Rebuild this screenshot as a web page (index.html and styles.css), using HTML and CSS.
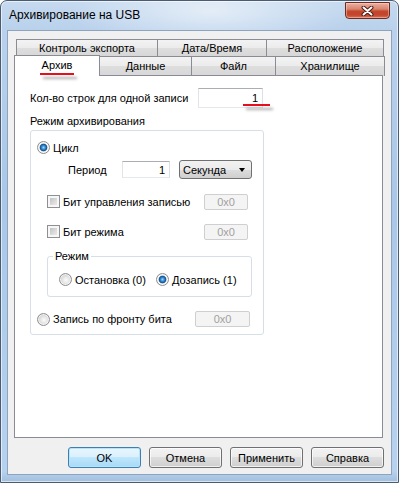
FILE: index.html
```html
<!DOCTYPE html>
<html lang="ru">

<head>
    <meta charset="UTF-8" />
    <title>Архивирование на USB</title>
    <link rel="stylesheet" href="styles.css">
</head>

<body>
    <div class="window">
        <div class="titlebar">
            <span class="title">Архивирование на USB</span>
            <button class="close-btn" type="button">
                <svg width="13" height="10" viewBox="0 0 13 10">
                    <path d="M2.5 1.5 L10.5 8.5 M10.5 1.5 L2.5 8.5" stroke="#4a1c14" stroke-width="4" stroke-linecap="round" />
                    <path d="M2.5 1.5 L10.5 8.5 M10.5 1.5 L2.5 8.5" stroke="#fff" stroke-width="2" stroke-linecap="round" />
                </svg>
            </button>
        </div>

        <div class="client">
            <div class="tabs">
                <div class="tab-row back">
                    <div class="tab">Контроль экспорта</div>
                    <div class="tab">Дата/Время</div>
                    <div class="tab">Расположение</div>
                </div>
                <div class="tab-row front">
                    <div class="tab active"><span class="mark">Архив</span></div>
                    <div class="tab">Данные</div>
                    <div class="tab">Файл</div>
                    <div class="tab">Хранилище</div>
                </div>
            </div>

            <div class="page">
                <div class="count-row">
                    <label class="count-label" for="rows">Кол-во строк для одной записи</label>
                    <div class="textbox count-box"><span class="mark">1</span></div>
                </div>

                <div class="caption">Режим архивирования</div>
                <div class="group">
                    <div class="opt-row">
                        <span class="radio on"></span>
                        <span>Цикл</span>
                    </div>

                    <div class="period-row">
                        <span class="period-label">Период</span>
                        <div class="textbox period-box">1</div>
                        <div class="combo">
                            <span>Секунда</span>
                            <span class="arrow"></span>
                        </div>
                    </div>

                    <div class="check-row first">
                        <span class="check-label"><span class="checkbox"></span>Бит управления записью</span>
                        <div class="hexbox">0x0</div>
                    </div>
                    <div class="check-row">
                        <span class="check-label"><span class="checkbox"></span>Бит режима</span>
                        <div class="hexbox">0x0</div>
                    </div>

                    <fieldset class="mode">
                        <legend>Режим</legend>
                        <div class="mode-row">
                            <span class="mode-opt stop"><span class="radio"></span>Остановка (0)</span>
                            <span class="mode-opt"><span class="radio on"></span>Дозапись (1)</span>
                        </div>
                    </fieldset>

                    <div class="edge-row">
                        <span class="edge-label"><span class="radio"></span>Запись по фронту бита</span>
                        <div class="hexbox wide">0x0</div>
                    </div>
                </div>
            </div>

            <div class="buttons">
                <button class="btn default" type="button">OK</button>
                <button class="btn" type="button">Отмена</button>
                <button class="btn" type="button">Применить</button>
                <button class="btn" type="button">Справка</button>
            </div>
        </div>
    </div>
</body>

</html>
```

FILE: styles.css
```css
* {
    box-sizing: border-box;
}

html,
body {
    margin: 0;
    background: #fff;
}

body {
    font-family: "Liberation Sans", Arial, sans-serif;
    font-size: 11px;
    color: #000;
}

/* окно */
.window {
    width: 399px;
    height: 483px;
    display: flex;
    flex-direction: column;
    padding: 0 6px 7px;
    border: 1px solid #4b5c72;
    border-radius: 7px 7px 0 0;
    background:
        radial-gradient(ellipse 140px 40px at 210px 10px, rgba(255, 255, 255, 0.55), rgba(255, 255, 255, 0)),
        linear-gradient(to bottom, #c6daef 0, #b9d1ec 30px, #a9c7e8 200px, #b6d2ef 470px, #9ebbd9 483px);
    box-shadow: inset 0 0 0 1px rgba(255, 255, 255, 0.6);
}

.titlebar {
    height: 29px;
    margin: 0 -6px;
    padding: 0 8px;
    display: flex;
    align-items: flex-start;
}

.title {
    font-size: 12px;
    line-height: 12px;
    margin-top: 8px;
    color: #000;
}

.close-btn {
    margin-left: auto;
    margin-top: 1px;
    width: 45px;
    height: 17px;
    padding: 0;
    border: 1px solid #6e2a20;
    border-radius: 0 0 4px 4px;
    background: linear-gradient(to bottom, #eab1a2 0, #d98670 40%, #c4462c 55%, #c3452b 80%, #d8765a 100%);
    box-shadow: inset 0 0 0 1px rgba(255, 220, 210, 0.45);
    display: flex;
    align-items: center;
    justify-content: center;
}

.client {
    flex: 1;
    border: 1px solid #8ea4bd;
    background: #f0f0f0;
    padding: 8px 0 0 6px;
    display: flex;
    flex-direction: column;
}

/* вкладки */
.tabs {
    width: 369px;
}

.tab-row {
    display: grid;
}

.tab-row.back {
    grid-template-columns: 142px 109px 117px;
    height: 17px;
    margin-left: 2px;
}

.tab-row.front {
    grid-template-columns: 86px 92px 84px 109px;
    height: 19px;
}

.tab {
    border: 1px solid #898c95;
    border-bottom: none;
    background: linear-gradient(to bottom, #f3f3f3 0, #ebebeb 50%, #dedede 50%, #d7d7d7 100%);
    display: flex;
    align-items: center;
    justify-content: center;
    line-height: 13px;
}

.tab + .tab {
    margin-left: -1px;
}

.tab.active {
    position: relative;
    z-index: 1;
    margin-top: -1px;
    height: 21px;
    background: #fff;
    padding-bottom: 2px;
}

.mark {
    position: relative;
}

.mark::after {
    content: "";
    position: absolute;
    left: -2px;
    right: -2px;
    bottom: -3px;
    height: 2px;
    background: #e5101b;
    box-shadow: 3px 4px 3px rgba(0, 0, 0, 0.35);
}

.count-box .mark::after {
    left: -9px;
    right: -12px;
    bottom: -2px;
}

/* страница */
.page {
    width: 369px;
    height: 363px;
    border: 1px solid #898c95;
    background: #fff;
    padding: 12px 0 0 15px;
}

.count-row {
    display: flex;
    align-items: center;
    height: 20px;
}

.count-label {
    width: 168px;
}

.textbox {
    border: 1px solid;
    border-color: #abadb3 #dbdfe6 #e3e9ef #e2e3ea;
    background: #fff;
    text-align: right;
    padding-right: 4px;
    display: flex;
    align-items: center;
    justify-content: flex-end;
}

.count-box {
    width: 65px;
    height: 20px;
}

.caption {
    margin-top: 7px;
    line-height: 13px;
}

.group {
    margin-top: 2px;
    width: 234px;
    height: 205px;
    border: 1px solid #d5dfe5;
    border-radius: 3px;
    padding: 10px 0 0 6px;
}

.opt-row {
    display: flex;
    align-items: center;
    gap: 3px;
    height: 13px;
}

.radio {
    flex: none;
    width: 13px;
    height: 13px;
    border-radius: 50%;
    border: 1px solid #8e8f8f;
    background: radial-gradient(circle at 55% 55%, #fbfbfb 0, #e8e8e8 3px, #cfcfcf 6px);
    box-shadow: inset 0 0 0 1px rgba(255, 255, 255, 0.7);
}

.radio.on {
    background: radial-gradient(circle at 50% 50%, #9ad6ff 0, #2b86d0 2px, #174f8a 3.4px, #e6e6e6 4.2px, #f4f4f4 4.8px, #cfcfcf 6px);
}

.period-row {
    display: flex;
    align-items: center;
    height: 19px;
    margin: 6px 0 0 31px;
}

.period-label {
    width: 54px;
}

.period-box {
    width: 48px;
    height: 17px;
}

.combo {
    margin-left: 9px;
    width: 73px;
    height: 19px;
    border: 1px solid #707070;
    border-radius: 3px;
    background: linear-gradient(to bottom, #f2f2f2 0, #ebebeb 50%, #dddddd 50%, #cfcfcf 100%);
    display: flex;
    align-items: center;
    padding: 0 6px 0 3px;
    justify-content: space-between;
}

.arrow {
    width: 0;
    height: 0;
    border-left: 3.5px solid transparent;
    border-right: 3.5px solid transparent;
    border-top: 4px solid #000;
}

.check-row,
.edge-row {
    display: flex;
    align-items: center;
    height: 17px;
}

.check-row {
    margin: 13px 0 0 10px;
}

.check-row.first {
    margin-top: 14px;
}

.check-label,
.edge-label,
.mode-opt {
    display: flex;
    align-items: center;
    gap: 3px;
}

.check-label {
    width: 157px;
    gap: 3px;
}

.checkbox {
    flex: none;
    width: 13px;
    height: 13px;
    border: 1px solid #8e8f8f;
    background: linear-gradient(135deg, #b3b6bb 0, #dedede 60%, #f1f1f1 100%);
    box-shadow: inset 0 0 0 2px #f7f7f7;
}

.hexbox {
    width: 44px;
    height: 16px;
    border: 1px solid #cfcfcf;
    border-radius: 2px;
    background: #f4f4f4;
    color: #a0a0a0;
    text-align: center;
    line-height: 14px;
}

.hexbox.wide {
    width: 55px;
}

.mode {
    margin: 10px 0 0 10px;
    width: 205px;
    min-width: 0;
    border: 1px solid #d5dfe5;
    border-radius: 3px;
    padding: 0 0 10px 0;
}

.mode legend {
    margin-left: 5px;
    padding: 0 2px;
    line-height: 13px;
}

.mode-row {
    display: flex;
    align-items: center;
    height: 13px;
    margin: 10px 0 0 11px;
}

.mode-opt.stop {
    width: 97px;
}

.edge-row {
    margin-top: 14px;
    height: 16px;
}

.edge-label {
    width: 158px;
}

/* кнопки */
.buttons {
    display: flex;
    justify-content: flex-end;
    gap: 8px;
    margin-top: 9px;
    padding-right: 7px;
}

.btn {
    width: 73px;
    height: 21px;
    padding: 0;
    font-family: inherit;
    font-size: 11px;
    color: #000;
    border: 1px solid #707070;
    border-radius: 3px;
    background: linear-gradient(to bottom, #f2f2f2 0, #ebebeb 50%, #dddddd 50%, #cfcfcf 100%);
    box-shadow: inset 0 0 0 1px rgba(255, 255, 255, 0.7);
}

.btn.default {
    border-color: #3c7fb1;
    background: linear-gradient(to bottom, #eaf6fd 0, #d9f0fc 50%, #bee6fd 50%, #a7d9f5 100%);
    box-shadow: inset 0 0 0 1px #b8e3fb;
}
```
